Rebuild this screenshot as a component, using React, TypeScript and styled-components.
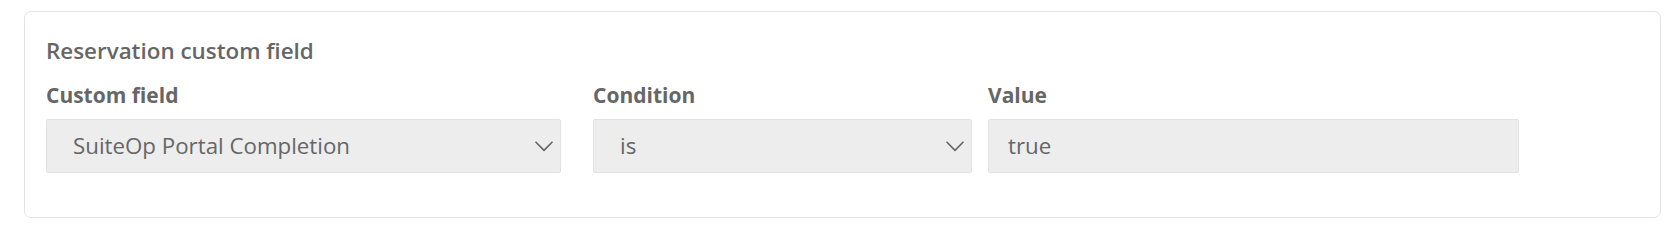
import React from "react";
import styled, { createGlobalStyle } from "styled-components";

const Global = createGlobalStyle`
  html, body { margin: 0; padding: 0; background: #ffffff; }
  body { font-family: "Open Sans", "Noto Sans", Arial, sans-serif; color: #666666; }
  * { box-sizing: border-box; }
`;

const Page = styled.div`
  padding: 11px 17px 0 24px;
`;

const Card = styled.section`
  width: 1637px;
  border: 1px solid #e3e3e3;
  border-radius: 7px;
  padding: 25px 21px 44px 21px;
  background: #ffffff;
`;

const Title = styled.h3`
  margin: 0 0 16px 0;
  font-size: 22.4px;
  line-height: 28px;
  font-weight: 600;
  color: #666666;
`;

const Row = styled.div`
  display: flex;
  align-items: flex-start;
`;

const Field = styled.div<{ $width: number; $gap: number }>`
  display: flex;
  flex-direction: column;
  gap: 10px;
  width: ${(p) => p.$width}px;
  margin-right: ${(p) => p.$gap}px;
  flex: none;
`;

const Label = styled.label`
  font-size: 21px;
  line-height: 28px;
  font-weight: 700;
  color: #666666;
`;

const Control = styled.div<{ $pad: number }>`
  display: flex;
  align-items: center;
  justify-content: space-between;
  height: 54px;
  padding: 0 7px 1px ${(p) => p.$pad}px;
  background: #ededed;
  border: 1px solid #e2e2e2;
  border-radius: 2px;
  font-size: 22.3px;
  color: #666666;
`;

const ControlText = styled.span`
  line-height: 28px;
`;

const ChevronBox = styled.span`
  display: flex;
  padding-top: 1px;
`;

const Chevron = () => (
  <ChevronBox>
    <svg width="18" height="11" viewBox="0 0 18 11" fill="none" aria-hidden="true">
      <path d="M1 1.2 L9 9.4 L17 1.2" stroke="#666666" strokeWidth="1.6" strokeLinecap="round" strokeLinejoin="round" />
    </svg>
  </ChevronBox>
);

export default function App() {
  return (
    <>
      <Global />
      <Page>
        <Card>
          <Title>Reservation custom field</Title>
          <Row>
            <Field $width={515} $gap={32}>
              <Label>Custom field</Label>
              <Control $pad={26}>
                <ControlText>SuiteOp Portal Completion</ControlText>
                <Chevron />
              </Control>
            </Field>
            <Field $width={379} $gap={16}>
              <Label>Condition</Label>
              <Control $pad={26}>
                <ControlText>is</ControlText>
                <Chevron />
              </Control>
            </Field>
            <Field $width={531} $gap={0}>
              <Label>Value</Label>
              <Control $pad={19}>
                <ControlText>true</ControlText>
              </Control>
            </Field>
          </Row>
        </Card>
      </Page>
    </>
  );
}
